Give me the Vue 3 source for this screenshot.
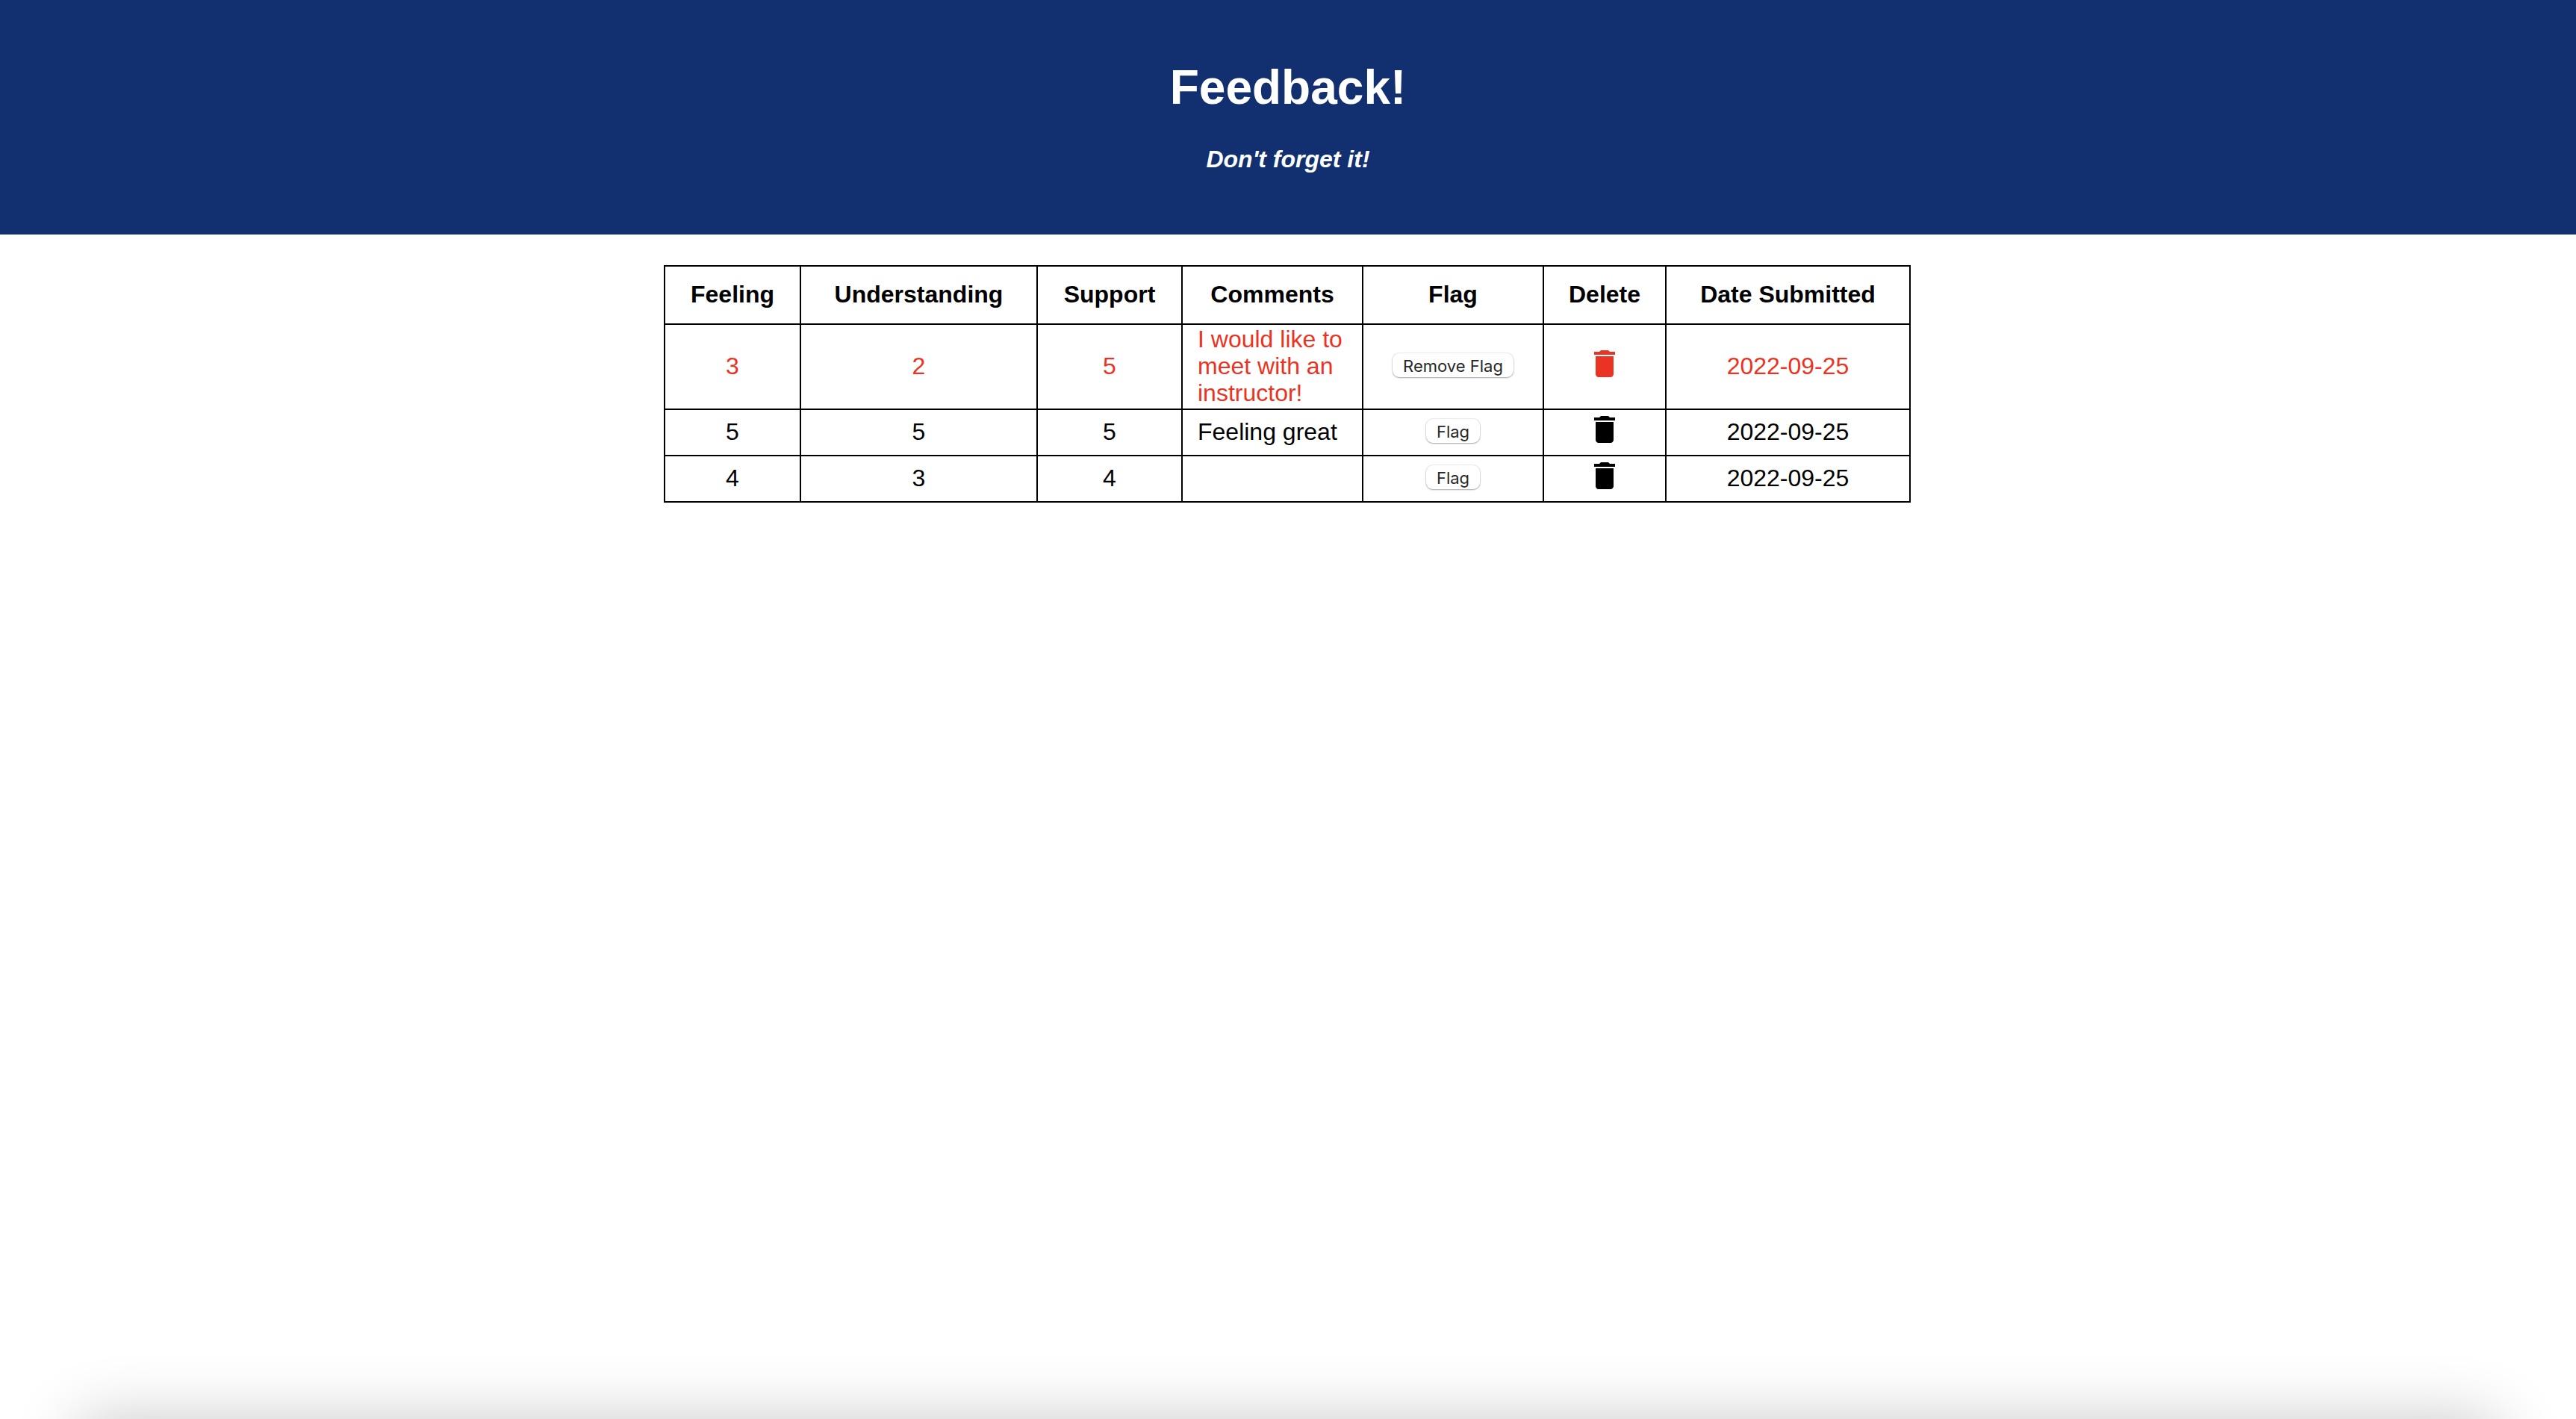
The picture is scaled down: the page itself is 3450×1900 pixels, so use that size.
<script setup>
import { ref } from 'vue'

const columns = [
  { key: 'feeling', label: 'Feeling' },
  { key: 'understanding', label: 'Understanding' },
  { key: 'support', label: 'Support' },
  { key: 'comments', label: 'Comments' },
  { key: 'flag', label: 'Flag' },
  { key: 'delete', label: 'Delete' },
  { key: 'date', label: 'Date Submitted' },
]

const feedback = ref([
  { id: 3, feeling: 3, understanding: 2, support: 5, comments: 'I would like to meet with an instructor!', flagged: true, date: '2022-09-25' },
  { id: 2, feeling: 5, understanding: 5, support: 5, comments: 'Feeling great', flagged: false, date: '2022-09-25' },
  { id: 1, feeling: 4, understanding: 3, support: 4, comments: '', flagged: false, date: '2022-09-25' },
])

function toggleFlag(item) {
  item.flagged = !item.flagged
}

function removeItem(id) {
  feedback.value = feedback.value.filter((item) => item.id !== id)
}
</script>

<template>
  <div class="app">
    <header class="header">
      <h1 class="title">Feedback!</h1>
      <h4 class="subtitle">Don't forget it!</h4>
    </header>

    <main>
      <table class="feedback">
        <colgroup>
          <col v-for="col in columns" :key="col.key" :class="'col-' + col.key" />
        </colgroup>
        <thead>
          <tr>
            <th v-for="col in columns" :key="col.key" scope="col">{{ col.label }}</th>
          </tr>
        </thead>
        <tbody>
          <tr v-for="item in feedback" :key="item.id" :class="{ flagged: item.flagged }">
            <td>{{ item.feeling }}</td>
            <td>{{ item.understanding }}</td>
            <td>{{ item.support }}</td>
            <td class="comments">{{ item.comments }}</td>
            <td class="flag">
              <button type="button" class="flag-button" @click="toggleFlag(item)">
                {{ item.flagged ? 'Remove Flag' : 'Flag' }}
              </button>
            </td>
            <td class="delete">
              <button type="button" class="delete-button" aria-label="Delete" @click="removeItem(item.id)">
                <svg viewBox="0 0 24 24" aria-hidden="true">
                  <path d="M6 19c0 1.1.9 2 2 2h8c1.1 0 2-.9 2-2V7H6v12zM19 4h-3.5l-1-1h-5l-1 1H5v2h14V4z" />
                </svg>
              </button>
            </td>
            <td>{{ item.date }}</td>
          </tr>
        </tbody>
      </table>
    </main>

    <div class="bottom-shade" aria-hidden="true"></div>
  </div>
</template>

<style>
body {
  margin: 0;
  background: #fff;
}
</style>

<style scoped>
.app {
  font-family: "Liberation Sans", Helvetica, Arial, sans-serif;
  font-size: 32px;
  line-height: 36px;
  color: #000;
  text-align: center;
}

.header {
  display: flex;
  flex-direction: column;
  gap: 40px;
  padding: 80px 0 82px;
  background: #122f70;
  color: #fff;
}

.title {
  margin: 0;
  font-size: 64px;
  line-height: 74px;
}

.subtitle {
  margin: 0;
  font-size: 32px;
  font-style: italic;
  line-height: 38px;
}

main {
  padding: 41px 2px 0 0;
}

.feedback {
  width: 48.4%;
  margin: 0 auto;
  table-layout: fixed;
  border-collapse: collapse;
}

.col-feeling { width: 182px; }
.col-understanding { width: 317px; }
.col-support { width: 194px; }
.col-comments { width: 242px; }
.col-flag { width: 242px; }
.col-delete { width: 164px; }
.col-date { width: 327px; }

th,
td {
  border: 2px solid #000;
}

th {
  padding: 19px 0 21px;
}

td {
  padding: 1px 0 3px;
}

.flagged {
  color: #ea3323;
}

.comments {
  padding-left: 20px;
  padding-right: 20px;
  text-align: left;
}

.flag {
  padding: 2px 0 6px;
}

.flag-button {
  display: block;
  margin: 0 auto;
  padding: 3px 14px 0;
  border: 0;
  border-radius: 9px;
  background: #fff;
  box-shadow: 0 0 1px 1px rgba(0, 0, 0, 0.08), 0 1px 2px rgba(0, 0, 0, 0.3);
  color: #262626;
  font-family: Inter, sans-serif;
  font-size: 22px;
  line-height: 29px;
}

.delete {
  padding: 2px 0 10px;
}

.delete-button {
  display: block;
  width: 48px;
  height: 48px;
  margin: 0 auto;
  padding: 0;
  border: 0;
  background: none;
  color: inherit;
}

.delete-button svg {
  display: block;
  width: 100%;
  height: 100%;
  fill: currentColor;
}

/* Soft shade rising from the bottom edge of the window */
.bottom-shade {
  position: fixed;
  right: 104px;
  bottom: -104px;
  left: 104px;
  height: 100px;
  border-radius: 20px;
  box-shadow: 0 0 88px rgba(0, 0, 0, 0.24);
  pointer-events: none;
}
</style>
